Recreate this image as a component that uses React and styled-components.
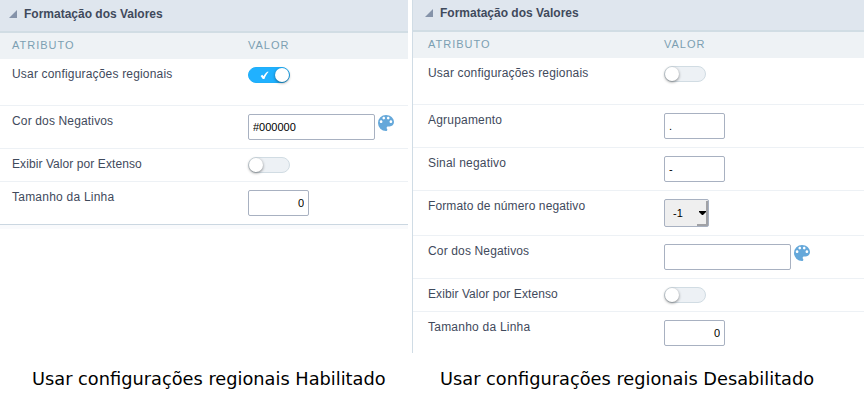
import React from "react";
import styled, { createGlobalStyle, css } from "styled-components";

const GlobalStyle = createGlobalStyle`
  *, *::before, *::after { box-sizing: border-box; }
  body { margin: 0; background: #fff; overflow: hidden; }
`;

const Page = styled.main`
  display: grid;
  grid-template-columns: 408px 452px;
  grid-template-rows: 353px 50px;
  column-gap: 4px;
  width: 864px;
  height: 403px;
  overflow: hidden;
  font-family: "Liberation Sans", Arial, sans-serif;
  color: #3f4a5c;
`;

const Panel = styled.section`
  min-width: 0;
  ${({ $divided }) => $divided && css`border-left: 1px solid #d0dce5;`}
`;

const PanelHeader = styled.header`
  display: flex;
  align-items: flex-start;
  gap: 7px;
  height: ${({ $compact }) => ($compact ? 32 : 33)}px;
  padding: ${({ $compact }) => ($compact ? "6px 0 0 12px" : "7px 0 0 9px")};
  background: #dfe6ee;
  border-bottom: 2px solid #d1dde4;
`;

const Title = styled.h2`
  margin: 0;
  font-size: 12px;
  line-height: 14px;
  font-weight: bold;
`;

const Triangle = styled.svg`
  width: 8px;
  height: 8px;
  margin-top: 3px;
  fill: #8593a9;
`;

const columns = css`
  display: grid;
  grid-template-columns: 236px 1fr;
  padding-left: ${({ $inset }) => ($inset ? 15 : 12)}px;
`;

const ColumnHead = styled.div`
  ${columns}
  height: 26px;
  padding-top: 6px;
  background: #eef2f5;
  color: #7c9fb2;
  font-size: 11px;
  line-height: 13px;
  letter-spacing: 1px;
`;

const Row = styled.div`
  ${columns}
  height: ${({ $height }) => $height}px;
  padding-top: 8px;
  border-bottom: 1px solid
    ${({ $last }) => ($last === "line" ? "#cbd7e1" : $last ? "transparent" : "#edf1f5")};
`;

const Label = styled.span`
  font-size: 12px;
  line-height: 14px;
  letter-spacing: ${({ $tracking }) => $tracking}px;
`;

const Value = styled.div`
  display: flex;
  align-items: flex-start;
  gap: 3px;
`;

const TextField = styled.input`
  width: ${({ $wide }) => ($wide ? 127 : 61)}px;
  height: 26px;
  margin: 0;
  padding: 0 4px 1px;
  border: 1px solid #a8b1c1;
  border-radius: 2px;
  outline: 0;
  background: #fff;
  color: #000;
  font: 11px "Liberation Sans", Arial, sans-serif;
  text-align: ${({ $number }) => ($number ? "right" : "left")};
`;

const Switch = styled.button`
  display: flex;
  align-items: center;
  justify-content: ${({ $on }) => ($on ? "flex-end" : "flex-start")};
  gap: 6px;
  width: 42px;
  height: 16px;
  padding: 0;
  border: 1px solid ${({ $on }) => ($on ? "#20aef8" : "#d1dce3")};
  border-radius: 8px;
  background: ${({ $on }) => ($on ? "#20b1ff" : "#edf1f5")};
`;

const Knob = styled.span`
  width: 14.5px;
  height: 14.5px;
  flex: none;
  margin-left: ${({ $on }) => ($on ? 0 : -0.5)}px;
  border-radius: 50%;
  background: #fff;
  box-shadow: 0 1px 3px rgba(0, 0, 0, 0.48);
`;

const CheckMark = styled.svg`
  width: 9px;
  height: 9px;
  fill: #fff;
`;

const PaletteSvg = styled.svg`
  width: 16px;
  height: 16px;
  margin-top: 1px;
  fill: #65a8da;
`;

const SelectBox = styled.button`
  display: flex;
  align-items: center;
  justify-content: space-between;
  width: 45px;
  height: 28px;
  padding: 0 2px 1px 8px;
  border: 1px solid #a8b1c1;
  border-radius: 2px;
  background:
    linear-gradient(#a1a2a6, #a1a2a6) right 0 top 1px / 2px 25px no-repeat,
    linear-gradient(#a1a2a6, #a1a2a6) right bottom / 11px 2px no-repeat,
    #efefef;
  color: #000;
  font: 11px "Liberation Sans", Arial, sans-serif;
`;

const Arrow = styled.svg`
  width: 7px;
  height: 4px;
  fill: #000;
`;

const FooterStrip = styled.div`
  height: 4px;
  background: #f9fafc;
`;

const Caption = styled.p`
  margin: 0;
  padding: 15px 0 0 ${({ $indent }) => $indent}px;
  color: #000;
  font: 17.78px/21px "DejaVu Sans", sans-serif;
  white-space: nowrap;
`;

function Toggle({ on = false }) {
  return (
    <Switch type="button" role="switch" aria-checked={on} $on={on}>
      {on && (
        <CheckMark viewBox="0 0 9 9">
          <path d="M.6 4.9 2.3 3.7l1.2 1.5C4.5 3.4 5.7 1.8 7.2.7L8.7.8C6.8 2.9 5.6 5 4.4 8H2.8Z" />
        </CheckMark>
      )}
      <Knob $on={on} />
    </Switch>
  );
}

function ColorField({ value = "" }) {
  return (
    <>
      <TextField $wide defaultValue={value} />
      <PaletteSvg viewBox="3 3 18 18">
        <path d="M12 3a9 9 0 0 0 0 18c.83 0 1.5-.67 1.5-1.5 0-.39-.15-.74-.39-1.01-.23-.26-.38-.61-.38-.99 0-.83.67-1.5 1.5-1.5H16c2.76 0 5-2.24 5-5 0-4.42-4.03-8-9-8zm-5.5 9c-.83 0-1.5-.67-1.5-1.5S5.67 9 6.5 9 8 9.67 8 10.5 7.33 12 6.5 12zm3-4C8.67 8 8 7.33 8 6.5S8.67 5 9.5 5s1.5.67 1.5 1.5S10.33 8 9.5 8zm5 0c-.83 0-1.5-.67-1.5-1.5S13.67 5 14.5 5s1.5.67 1.5 1.5S15.33 8 14.5 8zm3 4c-.83 0-1.5-.67-1.5-1.5S16.67 9 17.5 9s1.5.67 1.5 1.5-.67 1.5-1.5 1.5z" />
      </PaletteSvg>
    </>
  );
}

function FormatSelect() {
  return (
    <SelectBox type="button">
      -1
      <Arrow viewBox="0 0 7 4">
        <path d="M0 0h7v1L4 4H3L0 1Z" />
      </Arrow>
    </SelectBox>
  );
}

function ValuesPanel({ divided = false, rows, children }) {
  return (
    <Panel $divided={divided}>
      <PanelHeader $compact={divided}>
        <Triangle viewBox="0 0 8 8">
          <path d="M8 0v8H0Z" />
        </Triangle>
        <Title>Formatação dos Valores</Title>
      </PanelHeader>
      <ColumnHead $inset={divided}>
        <span>ATRIBUTO</span>
        <span>VALOR</span>
      </ColumnHead>
      {rows.map(({ label, tracking, height, control, last }) => (
        <Row key={label} $height={height} $last={last} $inset={divided}>
          <Label $tracking={tracking}>{label}</Label>
          <Value>{control}</Value>
        </Row>
      ))}
      {children}
    </Panel>
  );
}

const regional = { label: "Usar configurações regionais", tracking: 0.18, height: 47 };
const negativeColor = { label: "Cor dos Negativos", tracking: 0.15, height: 43 };
const spelledOut = { label: "Exibir Valor por Extenso", tracking: 0.08, height: 33 };
const lineSize = { label: "Tamanho da Linha", tracking: 0.23 };

const enabledRows = [
  { ...regional, control: <Toggle on /> },
  { ...negativeColor, control: <ColorField value="#000000" /> },
  { ...spelledOut, control: <Toggle /> },
  { ...lineSize, height: 43, control: <TextField $number defaultValue="0" />, last: "line" },
];

const disabledRows = [
  { ...regional, control: <Toggle /> },
  { label: "Agrupamento", tracking: 0.2, height: 43, control: <TextField defaultValue="." /> },
  { label: "Sinal negativo", tracking: 0.2, height: 43, control: <TextField defaultValue="-" /> },
  { label: "Formato de número negativo", tracking: 0.12, height: 45, control: <FormatSelect /> },
  { ...negativeColor, control: <ColorField /> },
  { ...spelledOut, control: <Toggle /> },
  { ...lineSize, height: 41, control: <TextField $number defaultValue="0" />, last: "plain" },
];

export default function App() {
  return (
    <>
      <GlobalStyle />
      <Page>
        <ValuesPanel rows={enabledRows}>
          <FooterStrip />
        </ValuesPanel>
        <ValuesPanel divided rows={disabledRows} />
        <Caption $indent={32}>Usar configurações regionais Habilitado</Caption>
        <Caption $indent={28}>Usar configurações regionais Desabilitado</Caption>
      </Page>
    </>
  );
}
